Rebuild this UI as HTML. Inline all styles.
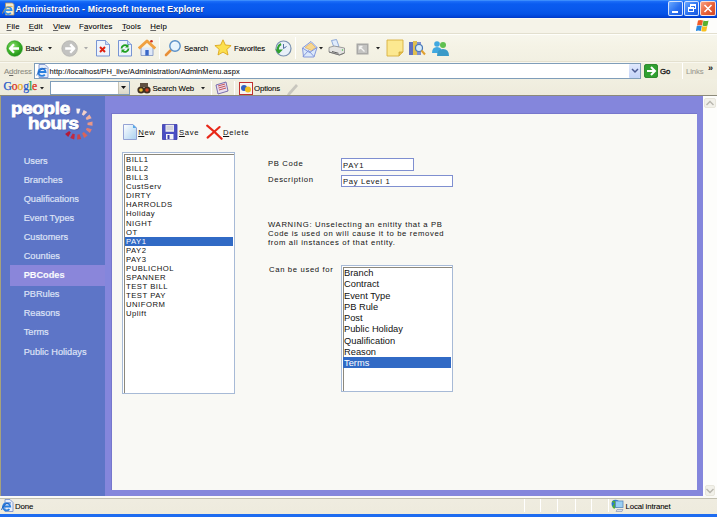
<!DOCTYPE html>
<html><head><meta charset="utf-8">
<style>
*{margin:0;padding:0;box-sizing:border-box}
html,body{width:717px;height:517px;overflow:hidden;background:#ece9d8;font-family:"Liberation Sans",sans-serif}
.a{position:absolute}
.t{position:absolute;white-space:nowrap;line-height:1}
#title{left:0;top:0;width:717px;height:18px;background:linear-gradient(#4a9cff 0px,#1a6cf8 1.5px,#0a5cf0 4px,#0858ec 10px,#0452e6 14px,#0044d8 16.5px,#0038c4 18px)}
#menu{left:0;top:18px;width:717px;height:16px;background:#f5f3e8;border-top:1px solid #fbfaf4;border-bottom:1px solid #e2dfcf}
#tool{left:0;top:34px;width:717px;height:28px;background:linear-gradient(#f7f6ec,#f5f3e6 40%,#f2f0e2);border-top:1px solid #fefefa;border-bottom:1px solid #e4e0cf}
#addr{left:0;top:62px;width:717px;height:17px;background:#f1eedf;border-top:1px solid #f9f8f0}
#goog{left:0;top:79px;width:717px;height:17px;background:linear-gradient(#f1efe1,#eeebdc);border-bottom:1px solid #8c8a7a}
#content{left:0;top:96px;width:717px;height:400px;background:#8486dc}
#side{left:0;top:96px;width:105px;height:400px;background:#5d75c7;border-left:1px solid #a6a27c}
#panel{left:111px;top:113px;width:586px;height:377px;background:#f9f9f5;border-left:1px solid #7777cc;border-top:1px solid #7777cc}
#scroll{left:703px;top:96px;width:14px;height:400px;background:#fdfdfb}
#status{left:0;top:496px;width:717px;height:18px;background:linear-gradient(#fbfaf6 0,#fbfaf6 1.5px,#b8b6a6 2px,#c8c6b6 2.8px,#efece0 3.5px,#eeebdd 100%)}
#bottom{left:0;top:513.5px;width:717px;height:4px;background:#1e6cf0}
.mt{font-size:7.8px;letter-spacing:0.15px;color:#000;top:23px;-webkit-text-stroke:0.08px #000}
.tt{font-size:7.8px;letter-spacing:-0.12px;color:#000;-webkit-text-stroke:0.08px}
.nav{font-size:9.2px;color:#dde2f6;-webkit-text-stroke:0.2px #dde2f6}
.lb{font-size:7.7px;color:#111;letter-spacing:0.5px}
.f{font-size:7.7px;color:#111;letter-spacing:0.65px}
.li{font-size:9.3px;color:#111}
u{text-decoration-color:#666;text-decoration-thickness:0.8px;text-underline-offset:1px}
</style></head><body>
<div id="title" class="a"></div>
<div id="menu" class="a"></div>
<div id="tool" class="a"></div>
<div id="addr" class="a"></div>
<div id="goog" class="a"></div>
<div id="content" class="a"></div>
<div id="side" class="a"></div>
<div id="panel" class="a"></div>
<div id="scroll" class="a"></div>
<div id="status" class="a"></div>
<div id="bottom" class="a"></div>
<!-- title bar -->
<svg class="a" style="left:2px;top:2px" width="13" height="14" viewBox="0 0 13 14">
<path d="M3.5 1h7l1.5 1.5v10.5H3.5z" fill="#f4ecd0" stroke="#b09060" stroke-width="0.8"/>
<path d="M2.5 8.2H9.6A3.5 3.5 0 1 0 8.8 10.8" fill="none" stroke="#3090f0" stroke-width="1.7"/>
<path d="M0.5 11.5C1.5 7 6.5 3.5 10.5 4.5" fill="none" stroke="#e0a030" stroke-width="0.8"/>
</svg>
<div class="t" style="left:15.5px;top:4.5px;font-size:8.8px;font-weight:bold;color:#fff;letter-spacing:0.14px;text-shadow:0.7px 0.7px 0 #1a3a98">Administration - Microsoft Internet Explorer</div>
<div class="a" style="left:668px;top:1px;width:15px;height:15px;border:1px solid rgba(255,255,255,0.8);border-radius:2px;background:linear-gradient(135deg,#6aa8ff,#2a70f0 55%,#1a58e0)"></div>
<div class="a" style="left:672px;top:11px;width:6px;height:2px;background:#fff"></div>
<div class="a" style="left:684px;top:1px;width:15px;height:15px;border:1px solid rgba(255,255,255,0.8);border-radius:2px;background:linear-gradient(135deg,#6aa8ff,#2a70f0 55%,#1a58e0)"></div>
<div class="a" style="left:690px;top:4px;width:6px;height:5px;border:1px solid #fff;border-top-width:2px"></div>
<div class="a" style="left:688px;top:7px;width:6px;height:5px;border:1px solid #fff;border-top-width:2px;background:#2f6ee8"></div>
<div class="a" style="left:700px;top:1px;width:16px;height:15px;border:1px solid rgba(255,255,255,0.8);border-radius:2px;background:linear-gradient(135deg,#f8a080,#e86038 55%,#d04828)"></div>
<svg class="a" style="left:700px;top:1px" width="16" height="15"><path d="M4.5 4l7 7M11.5 4l-7 7" stroke="#fff" stroke-width="1.6"/></svg>
<!-- windows flag -->
<div class="a" style="left:690px;top:18px;width:27px;height:15px;background:#fdfdfb"></div>
<svg class="a" style="left:696px;top:19px" width="14" height="13" viewBox="0 0 14 13">
<path d="M2 1.5q2.5-1 5 0l-1 5q-2.5-1-5 0z" fill="#f05a28"/>
<path d="M7.5 1.5q2.5 1 5 0l-1 5q-2.5 1-5 0z" fill="#5ab030"/>
<path d="M0.8 7q2.5-1 5 0l-1 5q-2.5-1-5 0z" fill="#2a8ae0"/>
<path d="M6.3 7q2.5 1 5 0l-1 5q-2.5 1-5 0z" fill="#f8c020"/>
</svg>
<!-- menu text -->
<div class="t mt" style="left:6.5px"><u>F</u>ile</div>
<div class="t mt" style="left:28.7px"><u>E</u>dit</div>
<div class="t mt" style="left:53px"><u>V</u>iew</div>
<div class="t mt" style="left:79px">F<u>a</u>vorites</div>
<div class="t mt" style="left:122px"><u>T</u>ools</div>
<div class="t mt" style="left:150.3px"><u>H</u>elp</div>

<!-- toolbar -->
<svg class="a" style="left:6px;top:40px" width="18" height="18" viewBox="0 0 18 18">
<defs><radialGradient id="gg" cx="0.4" cy="0.35" r="0.7"><stop offset="0" stop-color="#8ee070"/><stop offset="0.6" stop-color="#3cb028"/><stop offset="1" stop-color="#1a8a18"/></radialGradient></defs>
<circle cx="8.6" cy="8.5" r="7.8" fill="url(#gg)" stroke="#2a9a20" stroke-width="0.6"/>
<path d="M8 4.2L4 8.5l4 4.3M4.5 8.5h8.5" fill="none" stroke="#fff" stroke-width="2.3" stroke-linejoin="round"/>
</svg>
<div class="t tt" style="left:25.5px;top:45px">Back</div>
<svg class="a" style="left:48px;top:47px" width="5" height="3"><path d="M0 0h4l-2 2.5z" fill="#222"/></svg>
<svg class="a" style="left:61px;top:40px" width="18" height="18" viewBox="0 0 18 18">
<circle cx="8.6" cy="8.5" r="7.8" fill="#c2c2c0" stroke="#a8a8a6" stroke-width="0.6"/>
<path d="M9.2 4.2l4 4.3-4 4.3M12.7 8.5H4.2" fill="none" stroke="#fff" stroke-width="2.3" stroke-linejoin="round"/>
</svg>
<svg class="a" style="left:84px;top:47px" width="5" height="3"><path d="M0 0h4l-2 2.5z" fill="#aaa"/></svg>
<svg class="a" style="left:95px;top:40px" width="16" height="17" viewBox="0 0 16 17">
<path d="M1.5 0.5h9l4 4v11.5h-13z" fill="#eef3fc" stroke="#6a8ad0" stroke-width="0.9"/>
<path d="M10.5 0.5v4h4" fill="#c8d8f4" stroke="#6a8ad0" stroke-width="0.7"/>
<path d="M5 7l5 5M10 7l-5 5" stroke="#e02010" stroke-width="2"/>
</svg>
<svg class="a" style="left:118px;top:40px" width="15" height="17" viewBox="0 0 15 17">
<path d="M0.5 0.5h9l4 4v11.5h-13z" fill="#eef3fc" stroke="#6a8ad0" stroke-width="0.9"/>
<path d="M9.5 0.5v4h4" fill="#c8d8f4" stroke="#6a8ad0" stroke-width="0.7"/>
<path d="M3.5 8.5a3.5 3.5 0 0 1 6-2.3M10.5 8.5a3.5 3.5 0 0 1-6 2.3" fill="none" stroke="#20a020" stroke-width="1.8"/>
<path d="M10.5 4v3.5h-3.5zM3.5 13v-3.5h3.5z" fill="#20a020"/>
</svg>
<svg class="a" style="left:138px;top:39px" width="18" height="18" viewBox="0 0 18 18">
<path d="M3 8.5v8h12v-8" fill="#dfe8f8" stroke="#7a90c0" stroke-width="0.8"/>
<path d="M0.8 9.5L9 2l8.2 7.5" fill="none" stroke="#f0a040" stroke-width="3" stroke-linejoin="round"/>
<rect x="7.3" y="11" width="3.4" height="5.5" fill="#3a68c8"/>
<circle cx="13.5" cy="2.2" r="1.3" fill="#d03020"/>
</svg>
<div class="a" style="left:159px;top:37px;width:1px;height:22px;background:#d6d2c2;border-right:1px solid #fff"></div>
<svg class="a" style="left:164px;top:39px" width="18" height="18" viewBox="0 0 18 18">
<path d="M2 16l4.5-4.5" stroke="#e89038" stroke-width="2.6" stroke-linecap="round"/>
<circle cx="11" cy="7" r="5.2" fill="#e8f4fc" stroke="#5a90c8" stroke-width="1.4"/>
<path d="M8.5 5a3 3 0 0 1 3-1.5" stroke="#fff" stroke-width="1" fill="none"/>
</svg>
<div class="t tt" style="left:184px;top:45px">Search</div>
<svg class="a" style="left:214px;top:39px" width="18" height="18" viewBox="0 0 18 18">
<path d="M9 0.8l2.4 5.2 5.7.6-4.3 3.8 1.2 5.6L9 13.1 4 16l1.2-5.6L0.9 6.6l5.7-.6z" fill="#fce050" stroke="#d8a010" stroke-width="0.8" stroke-linejoin="round"/>
</svg>
<div class="t tt" style="left:234px;top:45px">Favorites</div>
<svg class="a" style="left:274px;top:40px" width="18" height="17" viewBox="0 0 18 17">
<circle cx="9.5" cy="8.5" r="7.5" fill="#e8f0f8" stroke="#7890b0" stroke-width="1.2"/>
<path d="M9.5 4v4.5l3-2" stroke="#5070a0" stroke-width="1" fill="none"/>
<path d="M1 9.5l4 4 4-4z" fill="#30a030"/>
<path d="M5 13a6 6 0 0 1 2-9" stroke="#30a030" stroke-width="2.2" fill="none"/>
</svg>
<div class="a" style="left:295px;top:37px;width:1px;height:22px;background:#d6d2c2;border-right:1px solid #fff"></div>
<svg class="a" style="left:301px;top:39px" width="18" height="19" viewBox="0 0 18 19">
<path d="M1.5 9L10 2.5l6 6-3 9.5H2.5z" fill="#dbe8fa" stroke="#7a90d8" stroke-width="0.9" stroke-linejoin="round"/>
<path d="M4 8.5l6-4.5 4.5 4.5-4 3z" fill="#f8d890" stroke="#e0a850" stroke-width="0.6"/>
<path d="M2 17.5l5.5-6 5.5 6M1.5 9l7 4.5 7.5-5" fill="none" stroke="#7a90d8" stroke-width="0.9"/>
</svg>
<svg class="a" style="left:319px;top:47px" width="5" height="3"><path d="M0 0h4l-2 2.5z" fill="#222"/></svg>
<svg class="a" style="left:328px;top:39px" width="18" height="18" viewBox="0 0 18 18">
<path d="M3.5 1.5l5-1 2.5 7-5 1z" fill="#e0ecfc" stroke="#7898d0" stroke-width="0.8"/>
<path d="M1 8.5l5-1.5 10.5 2v5l-5 2L1 13z" fill="#e4e4e2" stroke="#8a8a88" stroke-width="0.8" stroke-linejoin="round"/>
<path d="M1 13l10.5 3 5-2" fill="none" stroke="#707070" stroke-width="0.9"/>
<path d="M4 12.5l6.5 1.8" stroke="#505050" stroke-width="0.9"/>
<circle cx="14.5" cy="11" r="0.7" fill="#40c040"/>
</svg>
<svg class="a" style="left:355.5px;top:42.5px" width="13" height="12" viewBox="0 0 13 12">
<rect x="0.5" y="0.5" width="12" height="11" fill="#a8a8a6"/>
<rect x="2" y="2" width="9" height="8" fill="#c4c4c2"/>
<path d="M3.5 3.5l5 5M3.5 3.5h3M3.5 3.5v3" stroke="#f4f4f2" stroke-width="1.3"/>
</svg>
<svg class="a" style="left:376px;top:47px" width="5" height="3"><path d="M0 0h4l-2 2.5z" fill="#222"/></svg>
<svg class="a" style="left:386px;top:39px" width="18" height="18" viewBox="0 0 18 18">
<path d="M1 1h16v12l-4 4H1z" fill="#fce890" stroke="#d8b040" stroke-width="0.9"/>
<path d="M13 17v-4h4" fill="#e8c050" stroke="#c8a030" stroke-width="0.7"/>
</svg>
<svg class="a" style="left:408px;top:39px" width="18" height="18" viewBox="0 0 18 18">
<rect x="1" y="3" width="4" height="13" fill="#6070c0"/>
<rect x="5" y="2" width="4" height="14" fill="#e0c050"/>
<rect x="9" y="3" width="4" height="13" fill="#8090d0"/>
<circle cx="11" cy="9" r="3.5" fill="#d8ecf8" stroke="#4878b8" stroke-width="1.2"/>
<path d="M13.5 11.5l3.5 4" stroke="#e0a030" stroke-width="2"/>
</svg>
<svg class="a" style="left:431px;top:39px" width="19" height="18" viewBox="0 0 19 18">
<circle cx="6" cy="5" r="2.8" fill="#40a8e0"/>
<path d="M1 14q0-6 5-6t5 6z" fill="#40a8e0"/>
<circle cx="12" cy="6" r="3" fill="#60c050"/>
<path d="M6 17q0-7 6-7t6 7z" fill="#3a9ac8"/>
</svg>

<!-- address bar -->
<div class="t tt" style="left:4px;top:68px;color:#8a8a80">A<u>d</u>dress</div>
<div class="a" style="left:34px;top:63px;width:607px;height:15.5px;background:#fff;border:1px solid #7f9db9"></div>
<svg class="a" style="left:36px;top:64px" width="13" height="14" viewBox="0 0 13 14">
<path d="M3 0.5h6l3 3v10H3z" fill="#e8eefa" stroke="#7088c8" stroke-width="0.8"/>
<path d="M2.3 8H9.6A3.6 3.6 0 1 0 8.8 10.6" fill="none" stroke="#2a80e0" stroke-width="1.8"/>
<path d="M0.8 11.5C2 7 7 3.5 10.5 4.5" fill="none" stroke="#1a50b0" stroke-width="0.8"/>
</svg>
<div class="t tt" style="left:49.5px;top:67.5px;color:#111;font-size:7.5px;letter-spacing:0.08px">http://localhost/PH_live/Administration/AdminMenu.aspx</div>
<div class="a" style="left:629px;top:64px;width:11px;height:13.5px;background:linear-gradient(#e0e8fc,#c4d4f8);border-radius:1px"></div>
<svg class="a" style="left:631px;top:68px" width="8" height="6"><path d="M1 1l3 3 3-3" fill="none" stroke="#4a5a90" stroke-width="1.5"/></svg>
<svg class="a" style="left:644px;top:64px" width="14" height="14" viewBox="0 0 14 14">
<rect x="0.5" y="0.5" width="13" height="13" rx="1.5" fill="#30a030" stroke="#1a7a1a" stroke-width="0.8"/>
<path d="M7 3l4 4-4 4M10.5 7H3" fill="none" stroke="#fff" stroke-width="2"/>
</svg>
<div class="t tt" style="left:660px;top:67.5px;color:#111;-webkit-text-stroke:0.3px #111">Go</div>
<div class="a" style="left:682px;top:63px;width:1px;height:16px;background:#d8d4c4;border-right:1px solid #fff"></div>
<div class="t tt" style="left:686px;top:68px;color:#9a9a90">Links</div>
<div class="t" style="left:708px;top:64px;font-size:9px;font-weight:bold;color:#111">»</div>

<!-- google bar -->
<div class="t" style="left:3.5px;top:80.5px;font-size:11.6px;font-family:'Liberation Serif',serif;letter-spacing:-0.1px;-webkit-text-stroke:0.25px"><span style="color:#2858c8">G</span><span style="color:#d83020">o</span><span style="color:#e8a818">o</span><span style="color:#2858c8">g</span><span style="color:#28a040">l</span><span style="color:#d83020">e</span></div>
<svg class="a" style="left:40px;top:87px" width="5" height="3"><path d="M0 0h4l-2 2.5z" fill="#222"/></svg>
<div class="a" style="left:50px;top:81px;width:80px;height:14px;background:#fff;border:1px solid #7f9db9"></div>
<div class="a" style="left:118px;top:82px;width:11px;height:12px;background:linear-gradient(#f4f2ea,#dcd8c8);border-left:1px solid #c8c4b4"></div>
<svg class="a" style="left:121px;top:86px" width="6" height="4"><path d="M0 0h5l-2.5 3z" fill="#111"/></svg>
<svg class="a" style="left:137px;top:81px" width="14" height="14" viewBox="0 0 14 14">
<circle cx="4" cy="9" r="3.6" fill="#403020"/>
<circle cx="10" cy="9" r="3.6" fill="#403020"/>
<circle cx="4" cy="9" r="1.8" fill="#e8c030"/>
<circle cx="10" cy="9" r="1.8" fill="#d04020"/>
<rect x="3" y="2" width="8" height="4" fill="#605040"/>
</svg>
<div class="t tt" style="left:152.5px;top:85px">Search Web</div>
<svg class="a" style="left:201px;top:87px" width="5" height="3"><path d="M0 0h4l-2 2.5z" fill="#222"/></svg>
<div class="a" style="left:211px;top:81px;width:1px;height:14px;background:#d8d4c4;border-right:1px solid #fff"></div>
<svg class="a" style="left:215px;top:81px" width="14" height="14" viewBox="0 0 14 14">
<path d="M1 4l10-3 2 9-10 3z" fill="#e8e0f0" stroke="#6050a0" stroke-width="0.8"/>
<path d="M3 5l7-2M3.5 7l7-2M4 9l7-2" stroke="#c03030" stroke-width="0.8"/>
</svg>
<div class="a" style="left:234px;top:81px;width:1px;height:14px;background:#d8d4c4;border-right:1px solid #fff"></div>
<svg class="a" style="left:239px;top:82px" width="14" height="13" viewBox="0 0 14 13">
<rect x="0.5" y="0.5" width="13" height="12" fill="#f8f4f0" stroke="#c03030" stroke-width="1"/>
<circle cx="5" cy="6" r="3" fill="#3060c0"/>
<circle cx="9" cy="7.5" r="3" fill="#f0c020"/>
</svg>
<div class="t tt" style="left:254px;top:85px">Options</div>
<svg class="a" style="left:286px;top:81px" width="13" height="14" viewBox="0 0 13 14">
<path d="M2 12l8-9 2 2-8 9-3 0z" fill="#c8c6be"/>
</svg>

<!-- scrollbar -->
<div class="a" style="left:704px;top:97.5px;width:11.5px;height:10.5px;border:1px solid #e8e6dc;border-radius:2px;background:#f2f1ea"></div>
<svg class="a" style="left:704.7px;top:100px" width="10" height="6"><path d="M1.5 5l3.5-3.5 3.5 3.5" fill="none" stroke="#b8b6ae" stroke-width="1.4"/></svg>
<div class="a" style="left:705px;top:485px;width:10px;height:10.5px;border:1px solid #e8e6dc;border-radius:2px;background:#f2f1ea"></div>
<svg class="a" style="left:705px;top:488px" width="10" height="6"><path d="M1.5 1l3.5 3.5 3.5-3.5" fill="none" stroke="#b8b6ae" stroke-width="1.4"/></svg>

<!-- status bar -->
<svg class="a" style="left:1px;top:499px" width="13" height="13" viewBox="0 0 13 13">
<path d="M4 0.5h5l3 3v9H4z" fill="#e8eefa" stroke="#7088c8" stroke-width="0.8"/>
<path d="M1.8 7.5H9.2A3.6 3.6 0 1 0 8.4 10.1" fill="none" stroke="#2a80e0" stroke-width="1.8"/>
<path d="M0.5 11C1.5 6.5 6.5 3 10 4" fill="none" stroke="#1a50b0" stroke-width="0.8"/>
</svg>
<div class="t tt" style="left:15px;top:503.3px">Done</div>
<div class="a" style="left:524px;top:499px;width:1px;height:13px;background:#d0ccbc;border-right:1px solid #fff"></div>
<div class="a" style="left:540px;top:499px;width:1px;height:13px;background:#d0ccbc;border-right:1px solid #fff"></div>
<div class="a" style="left:557px;top:499px;width:1px;height:13px;background:#d0ccbc;border-right:1px solid #fff"></div>
<div class="a" style="left:575px;top:499px;width:1px;height:13px;background:#d0ccbc;border-right:1px solid #fff"></div>
<div class="a" style="left:591px;top:499px;width:1px;height:13px;background:#d0ccbc;border-right:1px solid #fff"></div>
<div class="a" style="left:608px;top:499px;width:1px;height:13px;background:#d0ccbc;border-right:1px solid #fff"></div>
<svg class="a" style="left:611px;top:499px" width="13" height="13" viewBox="0 0 13 13">
<circle cx="4.5" cy="4.8" r="4" fill="#2a78d0"/>
<path d="M1.5 3q1.5-1 2.5 0.5t-1 3 1 2.5" stroke="#50b030" stroke-width="1.6" fill="none"/>
<rect x="4.5" y="2" width="7.5" height="6.5" fill="#9ad0f4" stroke="#5a88b8" stroke-width="0.8"/>
<path d="M6 10.5h6l-1 2H5z" fill="#d8dce8" stroke="#8090b0" stroke-width="0.6"/>
</svg>
<div class="t tt" style="left:625.5px;top:503.3px">Local intranet</div>
<!-- sidebar -->
<div class="t" style="left:11.2px;top:99.9px;font-size:17px;font-weight:bold;color:#fff;line-height:1;transform:scaleX(1.11);transform-origin:0 0;-webkit-text-stroke:0.8px #fff;letter-spacing:-0.3px;text-shadow:1px 1px 1px rgba(40,50,120,0.45)">people</div>
<div class="t" style="left:28.2px;top:115.4px;font-size:17px;font-weight:bold;color:#fff;line-height:1;transform:scaleX(1.11);transform-origin:0 0;-webkit-text-stroke:0.8px #fff;letter-spacing:-0.3px;text-shadow:1px 1px 1px rgba(40,50,120,0.45)">hours</div>
<svg class="a" style="left:55px;top:102px" width="45" height="45" viewBox="0 0 45 45"><path d="M24.0 11.6 L25.4 6.7 L21.3 6.4 L21.8 11.4z" fill="#f6eeee"/><path d="M28.6 13.8 L32.2 10.1 L28.7 7.9 L26.8 12.6z" fill="#f2d0c8"/><path d="M31.7 17.9 L36.6 16.3 L34.5 12.6 L30.7 15.9z" fill="#eeb0a0"/><path d="M32.5 22.9 L37.5 23.8 L37.5 19.6 L32.5 20.7z" fill="#ea9888"/><path d="M30.9 27.7 L34.9 30.9 L36.8 27.2 L31.9 25.8z" fill="#e27c70"/><path d="M27.1 31.2 L29.2 35.9 L32.6 33.5 L28.9 30.0z" fill="#da6458"/><path d="M22.4 32.6 L22.1 37.6 L26.2 37.1 L24.6 32.2z" fill="#cc4448"/><path d="M17.7 31.6 L15.2 36.1 L19.2 37.4 L19.8 32.3z" fill="#c02a40"/><path d="M14.2 29.1 L10.1 32.1 L13.2 34.9 L15.8 30.5z" fill="#b41a38"/></svg>
<div class="a" style="left:10px;top:265px;width:95px;height:21px;background:#8a86da"></div>
<div class="t nav" style="left:23.7px;top:156.60px">Users</div>
<div class="t nav" style="left:23.7px;top:175.69px">Branches</div>
<div class="t nav" style="left:23.7px;top:194.78px">Qualifications</div>
<div class="t nav" style="left:23.7px;top:213.87px">Event Types</div>
<div class="t nav" style="left:23.7px;top:232.96px">Customers</div>
<div class="t nav" style="left:23.7px;top:252.05px">Counties</div>
<div class="t nav" style="left:23.7px;top:271.14px;font-weight:bold;color:#fff">PBCodes</div>
<div class="t nav" style="left:23.7px;top:290.23px">PBRules</div>
<div class="t nav" style="left:23.7px;top:309.32px">Reasons</div>
<div class="t nav" style="left:23.7px;top:328.41px">Terms</div>
<div class="t nav" style="left:23.7px;top:347.50px">Public Holidays</div>

<!-- panel toolbar -->
<svg class="a" style="left:122px;top:123px" width="16" height="18" viewBox="0 0 16 18">
<defs><linearGradient id="pg" x1="0" y1="0" x2="1" y2="1"><stop offset="0" stop-color="#ffffff"/><stop offset="1" stop-color="#a8d0f0"/></linearGradient></defs>
<path d="M1.5 1.5h9.5l3.5 3.5v11.5h-13z" fill="url(#pg)" stroke="#8a9ad0" stroke-width="0.9"/>
<path d="M11 1.5l3.5 3.5h-3.5z" fill="#58a8e8"/>
</svg>
<div class="t f" style="left:138.2px;top:128.7px"><span style="text-decoration:underline">N</span>ew</div>
<svg class="a" style="left:161px;top:123px" width="18" height="18" viewBox="0 0 18 18">
<path d="M1.5 1.5h14.5v15h-14.5z" fill="#4a4ec4" stroke="#3a3aa8" stroke-width="0.8"/>
<rect x="4.5" y="1.8" width="8.5" height="7" fill="#e8e8ec"/>
<path d="M5.5 4h6.5M5.5 6h6.5" stroke="#b8b8c8" stroke-width="0.8"/>
<rect x="5" y="11" width="7.5" height="5.5" fill="#f4f4f8"/>
<rect x="6.5" y="12" width="2" height="4" fill="#3a3aa8"/>
</svg>
<div class="t f" style="left:179px;top:128.7px"><span style="text-decoration:underline">S</span>ave</div>
<svg class="a" style="left:205px;top:123px" width="18" height="18" viewBox="0 0 18 18">
<path d="M2.2 2.6Q9 8 16.6 15.8" fill="none" stroke="#e82818" stroke-width="2.1" stroke-linecap="round"/>
<path d="M14.6 4Q9 9 2.6 14.6" fill="none" stroke="#e82818" stroke-width="2.1" stroke-linecap="round"/>
</svg>
<div class="t f" style="left:223px;top:128.7px"><span style="text-decoration:underline">D</span>elete</div>

<!-- list 1 -->
<div class="a" style="left:122px;top:152px;width:113px;height:242px;background:#fff;border:1.5px solid #a7bad6"></div>
<div class="a" style="left:124px;top:154px;width:110px;height:239px;border-left:1px solid #8c887c;border-top:1px solid #8c887c"></div>
<div class="a" style="left:125px;top:237px;width:108px;height:9px;background:#316ac5"></div>
<div class="a lb" style="left:126px;top:155px;line-height:9.08px">BILL1<br>BILL2<br>BILL3<br>CustServ<br>DIRTY<br>HARROLDS<br>Holiday<br>NIGHT<br>OT<br><span style="color:#fff;-webkit-text-stroke-color:#fff">PAY1</span><br>PAY2<br>PAY3<br>PUBLICHOL<br>SPANNER<br>TEST BILL<br>TEST PAY<br>UNIFORM<br>Uplift</div>

<!-- form -->
<div class="t f" style="left:268px;top:160px">PB Code</div>
<div class="t f" style="left:268px;top:176px">Description</div>
<div class="a" style="left:341px;top:158px;width:73px;height:13px;background:#fff;border:1px solid #7f8fd0"></div>
<div class="t f" style="left:343px;top:162px">PAY1</div>
<div class="a" style="left:341px;top:175px;width:112px;height:12px;background:#fff;border:1px solid #7f8fd0"></div>
<div class="t f" style="left:343px;top:178px">Pay Level 1</div>
<div class="a f" style="left:268px;top:220.3px;line-height:9px;white-space:nowrap">WARNING: Unselecting an enitity that a PB<br>Code is used on will cause it to be removed<br>from all instances of that entity.</div>
<div class="t f" style="left:269px;top:266px">Can be used for</div>

<!-- list 2 -->
<div class="a" style="left:341px;top:265px;width:112px;height:127px;background:#fff;border:1.5px solid #a7bad6"></div>
<div class="a" style="left:343px;top:267px;width:109px;height:124px;border-left:1px solid #8c887c;border-top:1px solid #8c887c"></div>
<div class="a" style="left:343px;top:357px;width:108px;height:11px;background:#316ac5"></div>
<div class="a li" style="left:344px;top:268px;line-height:11.3px">Branch<br>Contract<br>Event Type<br>PB Rule<br>Post<br>Public Holiday<br>Qualification<br>Reason<br><span style="color:#fff;-webkit-text-stroke-color:#fff">Terms</span></div>
</body></html>
